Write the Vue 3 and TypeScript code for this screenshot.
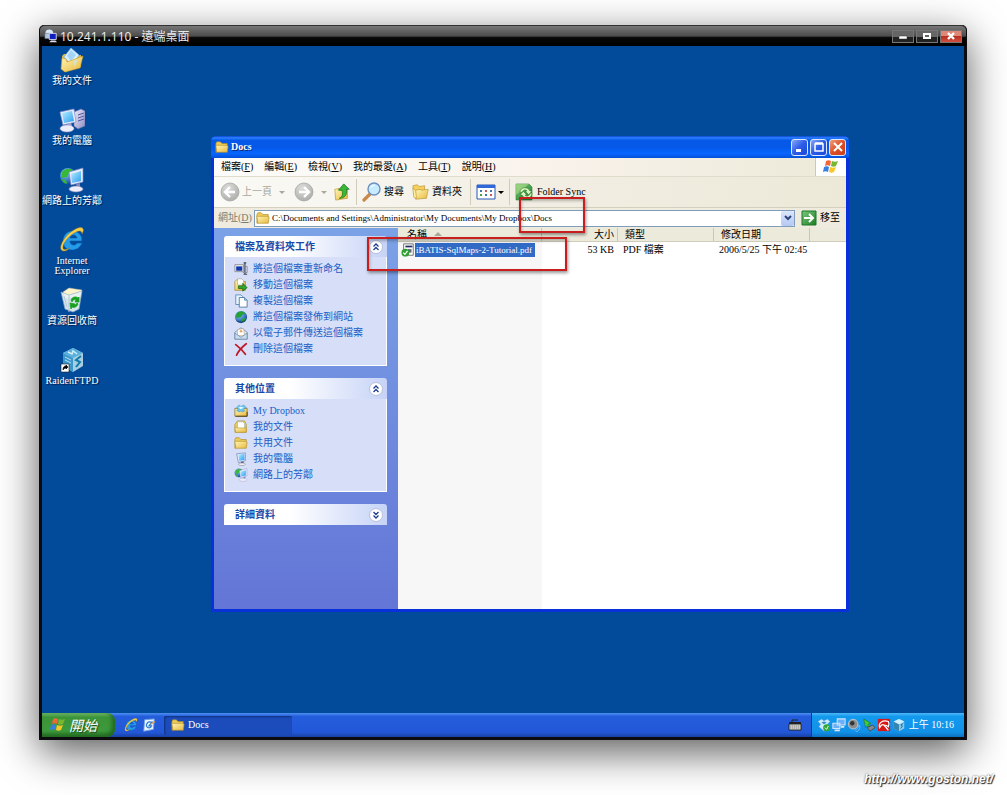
<script setup lang="ts">
interface Item {
  icon: string
  label: string
}

interface Panel {
  title: string
  open: boolean
  items: Item[]
}

const desktopIcons: Item[] = [
  { icon: 'documents', label: '我的文件' },
  { icon: 'computer', label: '我的電腦' },
  { icon: 'network', label: '網路上的芳鄰' },
  { icon: 'ie', label: 'Internet Explorer' },
  { icon: 'recycle', label: '資源回收筒' },
  { icon: 'raiden', label: 'RaidenFTPD' },
]

const menus: [string, string][] = [
  ['檔案', 'F'],
  ['編輯', 'E'],
  ['檢視', 'V'],
  ['我的最愛', 'A'],
  ['工具', 'T'],
  ['說明', 'H'],
]

const panels: Panel[] = [
  {
    title: '檔案及資料夾工作',
    open: true,
    items: [
      { icon: 'rename', label: '將這個檔案重新命名' },
      { icon: 'move', label: '移動這個檔案' },
      { icon: 'copy', label: '複製這個檔案' },
      { icon: 'globe', label: '將這個檔案發佈到網站' },
      { icon: 'mail', label: '以電子郵件傳送這個檔案' },
      { icon: 'delete', label: '刪除這個檔案' },
    ],
  },
  {
    title: '其他位置',
    open: true,
    items: [
      { icon: 'dropfolder', label: 'My Dropbox' },
      { icon: 'docfolder', label: '我的文件' },
      { icon: 'folder', label: '共用文件' },
      { icon: 'monitor', label: '我的電腦' },
      { icon: 'network', label: '網路上的芳鄰' },
    ],
  },
  { title: '詳細資料', open: false, items: [] },
]

const trayIcons: Item[] = [
  { icon: 'dropbox', label: 'Dropbox' },
  { icon: 'lan', label: 'Network' },
  { icon: 'speaker', label: 'Volume' },
  { icon: 'eject', label: 'Hardware' },
  { icon: 'umbrella', label: 'Antivirus' },
  { icon: 'cube', label: 'RaidenFTPD' },
]

const path = 'C:\\Documents and Settings\\Administrator\\My Documents\\My Dropbox\\Docs'
</script>

<template>
  <div class="page">
    <svg class="sprite" width="0" height="0" aria-hidden="true">
      <defs>
        <linearGradient id="gFolder" x1="0" y1="0" x2="1" y2="1">
          <stop offset="0" stop-color="#fff6b8" />
          <stop offset="1" stop-color="#e8b83c" />
        </linearGradient>
        <linearGradient id="gScreen" x1="0" y1="0" x2="1" y2="1">
          <stop offset="0" stop-color="#b8f0ff" />
          <stop offset="1" stop-color="#2c9cf0" />
        </linearGradient>
        <linearGradient id="gCase" x1="0" y1="0" x2="1" y2="1">
          <stop offset="0" stop-color="#eeeefc" />
          <stop offset="1" stop-color="#8c8cc4" />
        </linearGradient>
        <radialGradient id="gGlobe" cx="0.35" cy="0.3" r="0.8">
          <stop offset="0" stop-color="#8ad0ff" />
          <stop offset="1" stop-color="#0a3c9c" />
        </radialGradient>
        <radialGradient id="gGray" cx="0.4" cy="0.3" r="0.8">
          <stop offset="0" stop-color="#dededc" />
          <stop offset="1" stop-color="#a8a8a6" />
        </radialGradient>
        <linearGradient id="gGreen" x1="0" y1="0" x2="1" y2="1">
          <stop offset="0" stop-color="#7cc87c" />
          <stop offset="1" stop-color="#1c7c24" />
        </linearGradient>
      </defs>

      <symbol id="documents" viewBox="0 0 26 26">
        <path d="M3 9l2-2h5l2 2 10-1v12L6 25l-3-3z" fill="#e4b848" />
        <path d="M12 1l8 7-7 11-8-9z" fill="#d8f0ff" stroke="#78b4e8" stroke-width=".7" />
        <path d="M12 3l5 5-5 6-4-5z" fill="#a4d4f8" />
        <path d="M3 11l4 1 1 3 16-6-3 12L6 25 2 22z" fill="url(#gFolder)" stroke="#c89a28" stroke-width=".6" />
        <path d="M14 14l5-2-3 8z" fill="#cfe4d8" opacity=".8" />
      </symbol>
      <symbol id="computer" viewBox="0 0 26 26">
        <path d="M15 5l7-3 4 2v15l-7 3-4-3z" fill="url(#gCase)" stroke="#6868a8" stroke-width=".6" />
        <path d="M19 8l6-2M19 11l6-2M19 14l6-2" stroke="#5858a0" fill="none" />
        <path d="M1 5l14-3 2 13-13 3z" fill="#e8ecff" stroke="#8890c8" stroke-width=".7" />
        <path d="M3 6l10-2 2 10-10 2z" fill="url(#gScreen)" />
        <path d="M8 17l4-1 1 3h-4z" fill="#a8a8d0" />
        <ellipse cx="8" cy="21.500" rx="7" ry="3.500" fill="#eeeefa" stroke="#9898c8" stroke-width=".6" />
      </symbol>
      <symbol id="network" viewBox="0 0 26 26">
        <circle cx="9" cy="9" r="8" fill="url(#gGlobe)" />
        <path d="M3 5c3-4 8-4 11-2l-4 3-2 4-5 1zM2 12l5 1 1 4-3-1z" fill="#38b838" />
        <path d="M10 5l14-4v14l-12 3z" fill="#e8ecff" stroke="#7888c8" stroke-width=".7" />
        <path d="M12 7l10-3v10l-9 2z" fill="url(#gScreen)" />
        <path d="M17 17l4-1v4h-3z" fill="#8888b8" />
        <ellipse cx="17" cy="22" rx="7" ry="3" fill="#eeeefa" stroke="#8888b8" stroke-width=".6" />
      </symbol>
      <symbol id="ie" viewBox="0 0 26 26">
        <path
          d="M14 4a9 9 0 0 1 9 10H11c0 5 6 5 7 2h5c-2 5-6 7-10 7-6 0-9-4-9-9 0-6 4-10 10-10zm-3 7h7c-1-4-6-4-7 0z"
          fill="#249ce8" stroke="#0a58b0" stroke-width=".6"
        />
        <path d="M5 24C-2 24 3 12 12 5c5-4 11-6 12-3 1 1 0 3-1 5 0-3-2-4-6-2C10 8 3 17 4 21c0 2 3 2 6 0-1 2-3 3-5 3z" fill="#f8d048" stroke="#a87c18" stroke-width=".4" />
      </symbol>
      <symbol id="recycle" viewBox="0 0 26 26">
        <path d="M4 5l6-4 6 1 7 1-2 7-15 1z" fill="#fff4cc" stroke="#c8bc90" stroke-width=".5" />
        <path d="M2 5l8 3 13-4-3 18-6 3-8-3z" fill="#e8f2f4" stroke="#90b0c4" stroke-width=".7" opacity=".93" />
        <path d="M10 8v17M5 9l3 11" stroke="#b4c8d8" fill="none" />
        <path d="M12 13c1-3 5-4 7-2l1-1v5h-4l1-2c-2-1-3 0-4 2zM19 17c-1 3-4 4-6 3l-1 2-1-6 5 1-1 1c2 0 2-1 3-2z" fill="#18a020" stroke="#18a020" stroke-width=".8" />
      </symbol>
      <symbol id="raiden" viewBox="0 0 26 26">
        <path d="M14 1l10 5v13l-10 6-10-6V6z" fill="#a8cce0" />
        <path d="M14 1l10 5-10 5L4 6z" fill="#58b0dc" />
        <path d="M4 6l10 5v14L4 19z" fill="#3c98cc" />
        <path d="M9 5l4 2 1-3 4 3" stroke="#d0ecf8" stroke-width="1.500" fill="none" />
        <path d="M22 9l-5 4 4 2-4 5" stroke="#107cac" stroke-width="2" fill="none" />
        <path d="M6 10l6 3M6 13l6 3" stroke="#b4e0f4" fill="none" />
        <path d="M2 17h8v8H2z" fill="#fff" stroke="#222" stroke-width=".6" />
        <path d="M4 23c0-3 1-4 3-4v-1l2 2-2 2v-1c-2 0-2 1-3 2z" fill="#000" stroke="#000" stroke-width=".6" />
      </symbol>

      <symbol id="folder" viewBox="0 0 16 16">
        <path d="M1 4l1-2h4l2 2h6v3H2v7H1z" fill="#f0cc58" stroke="#a88420" stroke-width=".7" />
        <path d="M2 14L1 6h12l2 1-1 7z" fill="url(#gFolder)" stroke="#b08c20" stroke-width=".7" />
      </symbol>
      <symbol id="docfolder" viewBox="0 0 16 16">
        <path d="M1 14V5l3-4h8l2 4v9z" fill="#f0cc58" stroke="#a88420" stroke-width=".7" />
        <path d="M4 2h6l2 2v6H4z" fill="#fff" stroke="#88a8c8" stroke-width=".6" />
        <path d="M1 8l3 1h10v5H2z" fill="url(#gFolder)" stroke="#b08c20" stroke-width=".6" />
      </symbol>
      <symbol id="dropfolder" viewBox="0 0 16 16">
        <path d="M1 14V5h14v9z" fill="url(#gFolder)" stroke="#80641c" stroke-width=".8" />
        <path d="M3 4l3-3 2 2 3-2 3 3-3 2 1 2-2 1-2-1-3 1-2-2 2-1z" fill="#70c8f0" stroke="#2880b8" stroke-width=".5" />
        <path d="M5 4l3-1 3 1-3 2z" fill="#e8f8ff" />
        <path d="M2 14h13V9" stroke="#4c3c10" fill="none" />
      </symbol>
      <symbol id="openfolder" viewBox="0 0 20 20">
        <path d="M1 3l5-1 2 2 6-1v10H2z" fill="#f4d060" stroke="#b89028" stroke-width=".7" />
        <path d="M4 8l5-1 2 1 7-1-2 10-12 1z" fill="url(#gFolder)" stroke="#b89028" stroke-width=".7" />
        <path d="M2 16L1 6l3 2 1 9z" fill="#fff0a0" stroke="#b89028" stroke-width=".6" />
      </symbol>
      <symbol id="monitor" viewBox="0 0 16 16">
        <path d="M3 2l10-1v9l-8 2z" fill="#e8ecff" stroke="#6078b0" stroke-width=".7" />
        <path d="M5 3l7-1v7l-6 1z" fill="url(#gScreen)" />
        <path d="M8 11h3v2H8z" fill="#667" />
        <ellipse cx="9" cy="14" rx="4" ry="1.500" fill="#f0f0fa" stroke="#667" stroke-width=".5" />
      </symbol>
      <symbol id="rename" viewBox="0 0 16 16">
        <path d="M1 3h10v8H1z" fill="#eee" stroke="#777" stroke-width=".8" />
        <path d="M2.500 5h7v5h-7z" fill="#1038b0" />
        <path d="M11 1h3M12.500 1v13M11 14h4" stroke="#345" stroke-width="1.300" fill="none" />
        <path d="M10 5h5v7h-5" stroke="#888" fill="none" />
      </symbol>
      <symbol id="move" viewBox="0 0 16 16">
        <path d="M1 14V4l2-2h4l1 2h5v10z" fill="url(#gFolder)" stroke="#a08020" stroke-width=".8" />
        <path d="M4 1h5l2 2v5H4z" fill="#fff" stroke="#8a8a70" stroke-width=".5" />
        <path d="M5 9h5V6l5 5-5 4v-3H5z" fill="#30a830" stroke="#106010" stroke-width=".8" />
      </symbol>
      <symbol id="copy" viewBox="0 0 16 16">
        <path d="M2 1h6l2 2v9H2z" fill="#eaf4ff" stroke="#4880b0" stroke-width=".9" />
        <path d="M6 4h6l3 3v8H6z" fill="#fff" stroke="#386890" stroke-width=".9" />
        <path d="M12 4v3h3" fill="#a8d0e8" stroke="#386890" stroke-width=".7" />
      </symbol>
      <symbol id="globe" viewBox="0 0 16 16">
        <circle cx="8" cy="8" r="7" fill="url(#gGlobe)" />
        <path d="M3 4c2-3 7-4 10 0l-3 1-2 3-4 1-2-1zM9 10l5-1-2 4-4 1z" fill="#28a038" />
        <path d="M2 11c4 3 8 3 12-1-1 4-9 7-12 1z" fill="#18303c" opacity=".6" />
      </symbol>
      <symbol id="mail" viewBox="0 0 16 16">
        <path d="M1 7l7-5 7 5v8H1z" fill="#d8e8f8" stroke="#6884a8" stroke-width=".8" />
        <path d="M4 4l7-1 1 8H4z" fill="#fff" stroke="#c09060" stroke-width=".6" />
        <path d="M1 8l7 5 7-5v7H1z" fill="#c8dcf0" stroke="#587498" stroke-width=".7" />
        <circle cx="8" cy="6" r="1.500" fill="#e8a868" />
      </symbol>
      <symbol id="delete" viewBox="0 0 16 16">
        <path d="M2 3c4 3 8 7 11 11M14 2C9 6 5 10 3 15" stroke="#c01828" stroke-width="2" fill="none" stroke-linecap="round" />
      </symbol>
      <symbol id="pdf" viewBox="0 0 16 16">
        <path d="M3 1h11v13H3z" fill="#fff" stroke="#555" stroke-width=".9" />
        <path d="M5 3h8v2H5z" fill="#222c68" />
        <path d="M8 7h4v4H8z" fill="#667" />
        <circle cx="5" cy="11" r="4.500" fill="#30a030" />
        <path d="M2.500 11l2 2 3-4" stroke="#fff" stroke-width="1.400" fill="none" />
      </symbol>

      <symbol id="back" viewBox="0 0 20 20">
        <circle cx="10" cy="10" r="9" fill="url(#gGray)" stroke="#a0a09c" stroke-width=".7" />
        <path d="M10 5l-5 5 5 5M5 10h10" stroke="#fff" stroke-width="2.400" fill="none" />
      </symbol>
      <symbol id="forward" viewBox="0 0 20 20">
        <circle cx="10" cy="10" r="9" fill="url(#gGray)" stroke="#a0a09c" stroke-width=".7" />
        <path d="M10 5l5 5-5 5M15 10H5" stroke="#fff" stroke-width="2.400" fill="none" />
      </symbol>
      <symbol id="up" viewBox="0 0 20 20">
        <path d="M2 7l5-1 1 2 8-1v10L3 19z" fill="url(#gFolder)" stroke="#b89028" stroke-width=".7" />
        <path d="M7 17c4-2 4-5 3-9H6l6-7 6 6h-3c1 6-2 10-8 10z" fill="#38b838" stroke="#187018" stroke-width=".8" />
      </symbol>
      <symbol id="search" viewBox="0 0 20 20">
        <path d="M2 18l6-6" stroke="#c88848" stroke-width="3.200" stroke-linecap="round" />
        <circle cx="12" cy="7" r="6" fill="#c8ecff" stroke="#6c90c0" stroke-width="1.400" />
        <path d="M8 6c1-3 4-3 5-3-1 1-4 2-5 3z" fill="#fff" />
      </symbol>
      <symbol id="views" viewBox="0 0 20 16">
        <path d="M1 1h18v14H1z" fill="#fff" stroke="#2858b8" />
        <path d="M1 1h18v3H1z" fill="#3068d8" />
        <path d="M4 6h2v2H4zM9 10h2v2H9zM14 6h2v2h-2z" fill="#3c78a8" />
        <path d="M9 6h2v2H9zM14 10h2v2h-2z" fill="#c85858" />
        <path d="M4 10h2v2H4z" fill="#48a048" />
      </symbol>
      <symbol id="sync" viewBox="0 0 20 18">
        <path d="M1 1h13l3 3v13H1z" fill="url(#gGreen)" stroke="#388038" stroke-width=".6" />
        <path d="M1 1h13L1 12z" fill="#b0e088" opacity=".6" />
        <path d="M5 9c0-5 8-6 10-1h2l-3 4-4-4h2c-2-2-4-1-5 2zM17 10c0 6-8 7-10 2H5l3-4 4 4h-2c2 2 4 1 5-2z" fill="#dcf4c4" stroke="#287c28" stroke-width=".6" />
      </symbol>
      <symbol id="flag" viewBox="0 0 18 16">
        <path d="M4 2c2-1 3-1 5 0L8 7c-2-1-3-1-5 0z" fill="#f06838" />
        <path d="M10 2c2 1 4 1 6 0l-2 5c-2 1-3 1-5 0z" fill="#78b830" />
        <path d="M2 8c2-1 4-1 5 0l-1 5c-2-1-3-1-5 0z" fill="#3880e0" />
        <path d="M8 8c2 1 4 1 6 0l-2 5c-2 1-3 1-5 0z" fill="#f8c828" />
      </symbol>
      <symbol id="go" viewBox="0 0 16 16">
        <path d="M1 1h14v14H1z" fill="url(#gGreen)" stroke="#187828" />
        <path d="M3 8h9M8 4l4 4-4 4" stroke="#fff" stroke-width="2" fill="none" />
      </symbol>
      <symbol id="chevrons" viewBox="0 0 14 14">
        <circle cx="7" cy="7" r="6.500" fill="#fff" stroke="#b8c0dc" />
        <path d="M4.500 6.500L7 4l2.500 2.500M4.500 10L7 7.500 9.500 10" stroke="#1c3c90" stroke-width="1.300" fill="none" />
      </symbol>

      <symbol id="rdp" viewBox="0 0 16 16">
        <circle cx="6" cy="5" r="4.500" fill="#d8e8f4" />
        <path d="M1 5h7v6H1z" fill="#b0c8e0" stroke="#667" stroke-width=".6" />
        <path d="M6 5h8v7H6z" fill="#1020c0" stroke="#dde" />
        <path d="M8 13h5l2 2H6z" fill="#dde" />
      </symbol>
      <symbol id="showdesk" viewBox="0 0 16 16">
        <path d="M3 2l11-1-1 12-11 2z" fill="#e8f4ff" stroke="#70a0e0" />
        <path d="M11 5C7 3 5 6 5 9c1 3 5 3 6 0H8l4-5" stroke="#2878d0" stroke-width="1.400" fill="none" />
        <path d="M10 7l5-3" stroke="#e09848" stroke-width="1.500" />
      </symbol>
      <symbol id="keyboard" viewBox="0 0 14 12">
        <path d="M4 3V1h6" stroke="#222" fill="none" />
        <path d="M1 3h12v2H1z" fill="#222" />
        <path d="M1 5h12v6H1z" fill="#e8e8e0" stroke="#222" />
        <path d="M2 7h10M2 9h10" stroke="#777" stroke-dasharray="1.500 .5" />
      </symbol>
      <symbol id="dropbox" viewBox="0 0 16 16">
        <path d="M1 4l4-3 3 2 4-2 3 3-3 3 2 3-6 5-6-5 2-3z" fill="#c8ecfc" stroke="#4890c8" stroke-width=".6" />
        <path d="M5 5l3-1 3 1-3 2z" fill="#3c88c4" />
        <circle cx="11" cy="11" r="4" fill="#30a838" />
        <path d="M9 11l2 2 2-4" stroke="#fff" fill="none" />
      </symbol>
      <symbol id="lan" viewBox="0 0 16 16">
        <path d="M6 1h9v7H6zM1 6h8v6H1z" fill="#68b0f8" stroke="#d4e4fc" stroke-width="1.200" />
        <path d="M3 14h6M10 10h4" stroke="#dce8fc" stroke-width="2" />
      </symbol>
      <symbol id="speaker" viewBox="0 0 16 16">
        <circle cx="7" cy="7" r="5.500" fill="#8c8c8c" stroke="#ccc" />
        <circle cx="6" cy="6" r="2.500" fill="#333" />
        <path d="M12 7c2 3 0 6-3 7M14 8c2 4-1 7-4 8" stroke="#8cbcff" fill="none" />
      </symbol>
      <symbol id="eject" viewBox="0 0 16 16">
        <path d="M2 1l8 5-3 1 2 3-4-1-1 2z" fill="#48c838" stroke="#187018" stroke-width=".6" />
        <path d="M6 11l6-3 3 3-6 4z" fill="#888" stroke="#333" stroke-width=".7" />
      </symbol>
      <symbol id="umbrella" viewBox="0 0 16 16">
        <path d="M1 1h14v14H1z" fill="#d81818" />
        <path d="M3 11C1 5 7 2 13 4c1 2 1 4 0 6-2-2-4-2-5-2-2-1-4 1-5 3z" fill="#d81818" stroke="#fff" stroke-width="1.400" />
        <path d="M8 8l5 6" stroke="#fff" stroke-width="1.400" />
      </symbol>
      <symbol id="cube" viewBox="0 0 16 16">
        <path d="M8 1l6 3v8l-6 3-6-3V4z" fill="#88ccec" />
        <path d="M2 4l6 3v8l-6-3z" fill="#3884b0" />
        <path d="M8 1l6 3-6 3-6-3z" fill="#d0f0fc" />
        <path d="M13 6l-3 2 2 1-2 3" stroke="#1c6490" fill="none" />
      </symbol>
    </svg>

    <main class="remote">
      <header class="remote-bar">
        <svg class="i14"><use href="#rdp" /></svg>
        <h1>10.241.1.110 - 遠端桌面</h1>
        <div class="remote-btns">
          <button type="button" aria-label="Minimize">
            <svg viewBox="0 0 10 10"><path d="M1 5h8v3H1z" fill="#fff" stroke="#333" stroke-width=".5" /></svg>
          </button>
          <button type="button" aria-label="Maximize">
            <svg viewBox="0 0 10 10"><path d="M2 3h6v4H2z" fill="none" stroke="#fff" stroke-width="2" /></svg>
          </button>
          <button type="button" class="red" aria-label="Close">
            <svg viewBox="0 0 10 10"><path d="M2 2l6 6M8 2L2 8" stroke="#fff" stroke-width="2.400" /></svg>
          </button>
        </div>
      </header>

      <section class="desktop">
        <nav class="shortcuts">
          <a v-for="s in desktopIcons" :key="s.label" href="#">
            <svg class="i26"><use :href="'#' + s.icon" /></svg>
            <span>{{ s.label }}</span>
          </a>
        </nav>

        <section class="window">
          <header class="win-bar">
            <svg class="i14"><use href="#folder" /></svg>
            <h2>Docs</h2>
            <button type="button" aria-label="Minimize window">
              <svg viewBox="0 0 14 14"><path d="M3 9h5v3H3z" fill="#fff" /></svg>
            </button>
            <button type="button" aria-label="Maximize window">
              <svg viewBox="0 0 14 14"><path d="M3 4h8v7H3zM3 3h8" fill="none" stroke="#fff" stroke-width="1.500" /></svg>
            </button>
            <button type="button" class="close" aria-label="Close window">
              <svg viewBox="0 0 14 14"><path d="M3 3l8 8M11 3l-8 8" stroke="#fff" stroke-width="2" /></svg>
            </button>
          </header>

          <div class="menu-row">
            <nav class="menus">
              <button v-for="[name, key] in menus" :key="key" type="button">{{ name }}(<u>{{ key }}</u>)</button>
            </nav>
            <div class="flag"><svg><use href="#flag" /></svg></div>
          </div>

          <div class="toolbar">
            <button type="button" class="off nav-back"><svg class="i20"><use href="#back" /></svg>上一頁<i class="caret" /></button>
            <button type="button" class="off nav-fwd" aria-label="Forward"><svg class="i20"><use href="#forward" /></svg><i class="caret" /></button>
            <button type="button" aria-label="Up"><svg class="i18"><use href="#up" /></svg></button>
            <span class="sep" />
            <button type="button"><svg class="i20"><use href="#search" /></svg>搜尋</button>
            <button type="button" class="folders"><svg class="i18"><use href="#openfolder" /></svg>資料夾</button>
            <span class="sep" />
            <button type="button" aria-label="Views"><svg class="i20"><use href="#views" /></svg><i class="caret" /></button>
            <span class="sep" />
            <button type="button"><svg class="i20"><use href="#sync" /></svg>Folder Sync</button>
          </div>

          <div class="address">
            <label for="addr">網址(<u>D</u>)</label>
            <div class="addr-box">
              <svg class="i14"><use href="#folder" /></svg>
              <input id="addr" type="text" :value="path" />
              <button type="button" aria-label="Address list">
                <svg viewBox="0 0 10 10"><path d="M2 3l3 3 3-3" fill="none" stroke="#2c4478" stroke-width="2" /></svg>
              </button>
            </div>
            <button type="button" class="go"><svg class="i16"><use href="#go" /></svg>移至</button>
          </div>

          <div class="content">
            <aside>
              <section v-for="p in panels" :key="p.title" class="panel">
                <header>
                  <h3>{{ p.title }}</h3>
                  <button type="button" :aria-label="p.title" :aria-expanded="p.open">
                    <svg class="i14" :class="{ flip: !p.open }"><use href="#chevrons" /></svg>
                  </button>
                </header>
                <ul v-if="p.open">
                  <li v-for="t in p.items" :key="t.label">
                    <a href="#"><svg class="i14"><use :href="'#' + t.icon" /></svg>{{ t.label }}</a>
                  </li>
                </ul>
              </section>
            </aside>

            <div class="files">
              <table>
                <colgroup>
                  <col class="c-name" /><col class="c-size" /><col class="c-type" /><col class="c-date" /><col />
                </colgroup>
                <thead>
                  <tr>
                    <th>名稱<i class="sort" /></th>
                    <th class="num">大小</th>
                    <th>類型</th>
                    <th>修改日期</th>
                    <th />
                  </tr>
                </thead>
                <tbody>
                  <tr>
                    <td><div class="file"><svg class="i14"><use href="#pdf" /></svg><span>iBATIS-SqlMaps-2-Tutorial.pdf</span></div></td>
                    <td class="num">53 KB</td>
                    <td>PDF 檔案</td>
                    <td>2006/5/25 下午 02:45</td>
                    <td />
                  </tr>
                </tbody>
              </table>
            </div>
          </div>

          <div class="mark mark-path" />
          <div class="mark mark-file" />
        </section>
      </section>

      <footer class="taskbar">
        <button type="button" class="start"><svg><use href="#flag" /></svg>開始</button>
        <div class="quick">
          <button type="button" aria-label="Internet Explorer"><svg class="i14"><use href="#ie" /></svg></button>
          <button type="button" aria-label="Show desktop"><svg class="i14"><use href="#showdesk" /></svg></button>
        </div>
        <button type="button" class="task"><svg class="i14"><use href="#folder" /></svg>Docs</button>
        <button type="button" class="lang" aria-label="Keyboard"><svg class="i14"><use href="#keyboard" /></svg></button>
        <div class="tray">
          <svg v-for="t in trayIcons" :key="t.icon" class="i14" role="img" :aria-label="t.label"><use :href="'#' + t.icon" /></svg>
          <time>上午 10:16</time>
        </div>
      </footer>
    </main>

    <p class="credit"><a href="#">http://www.goston.net/</a></p>
  </div>
</template>

<style>
body {
  margin: 0;
  background: #fff;
}
</style>

<style scoped>
.page {
  box-sizing: border-box;
  min-height: 100vh;
  padding: 25px 40px 0 39px;
  display: flex;
  flex-direction: column;
  overflow: hidden;
  font: 10px/12px 'Liberation Serif', 'Noto Sans CJK TC', serif;
  color: #000;
}
.sprite {
  position: absolute;
}
h1, h2, h3, p, ul {
  margin: 0;
  padding: 0;
  list-style: none;
}
button {
  margin: 0;
  padding: 0;
  border: 0;
  background: none;
  font: inherit;
  color: inherit;
  display: flex;
  align-items: center;
  white-space: nowrap;
}
a {
  color: inherit;
  text-decoration: none;
}
svg {
  display: block;
  flex: none;
}
.i14 { width: 14px; height: 14px; }
.i16 { width: 16px; height: 16px; }
.i18 { width: 18px; height: 18px; }
.i20 { width: 20px; height: 20px; }
.i26 { width: 26px; height: 26px; }

.remote {
  flex: 1;
  display: flex;
  flex-direction: column;
  box-sizing: border-box;
  border: 3px solid #0c0c10;
  border-top: 0;
  border-radius: 5px 5px 1px 1px;
  background: #0c0c10;
  box-shadow: 0 12px 40px rgba(0, 0, 0, 0.65);
}
.remote-bar {
  height: 21px;
  margin: 0 -2px;
  padding: 0 4px;
  box-sizing: border-box;
  display: flex;
  align-items: center;
  gap: 2px;
  border-radius: 5px 5px 0 0;
  border-top: 1px solid #333;
  background: linear-gradient(#777, #4c4c4c 50%, #080808 58%, #000);
  color: #e8e8e8;
}
.remote-bar h1 {
  flex: 1;
  padding-top: 2px;
  font: 12px/18px 'Noto Sans', 'Noto Sans CJK TC', sans-serif;
}
.remote-btns {
  display: flex;
  gap: 2px;
}
.remote-btns button {
  width: 22px;
  height: 13px;
  box-sizing: border-box;
  justify-content: center;
  border: 1px solid #777;
  background: linear-gradient(#666 50%, #222 50%);
}
.remote-btns .red {
  background: linear-gradient(#e08878 45%, #b83020 50%, #d05040);
}
.remote-btns svg {
  width: 10px;
  height: 10px;
}

.desktop {
  flex: 1;
  position: relative;
  background: #024b9b;
}
.shortcuts {
  width: 60px;
  display: flex;
  flex-direction: column;
}
.shortcuts a {
  height: 59px;
  padding-top: 1px;
  display: flex;
  flex-direction: column;
  align-items: center;
  gap: 3px;
  color: #fff;
  line-height: 10px;
  text-align: center;
  text-shadow: 1px 1px 1px #001c48;
}

.window {
  position: absolute;
  inset: 90px 115px 101px 169px;
  box-sizing: border-box;
  padding: 0 3px 3px;
  display: flex;
  flex-direction: column;
  border-radius: 5px 5px 0 0;
  background: #0831d9;
}
.win-bar {
  height: 22px;
  margin: 0 -3px;
  padding: 0 3px 0 4px;
  display: flex;
  align-items: center;
  gap: 2px;
  border-radius: 5px 5px 0 0;
  background: linear-gradient(#0a44d0, #2a80ff 8%, #0558e8 20%, #0558e8 50%, #0866ff 80%, #0450d8);
  color: #fff;
}
.win-bar h2 {
  flex: 1;
  font: bold 10px/12px 'Liberation Serif', serif;
  text-shadow: 1px 1px #0a2878;
}
.win-bar button {
  width: 17px;
  height: 17px;
  box-sizing: border-box;
  justify-content: center;
  border: 1px solid #dce8ff;
  border-radius: 3px;
  background: linear-gradient(135deg, #88a8f8, #2c5ce8 50%, #1c48d8);
}
.win-bar .close {
  background: linear-gradient(135deg, #f0a080, #dc5028 50%, #c83c18);
}
.win-bar button svg {
  width: 14px;
  height: 14px;
}

.menu-row {
  display: flex;
  height: 18px;
  background: linear-gradient(90deg, #fcfcfa, #f8f2ea 55%, #ece9d8);
  border-bottom: 1px solid #e0dccc;
}
.menus {
  flex: 1;
  display: flex;
  gap: 11px;
  padding-left: 7px;
}
.flag {
  width: 30px;
  display: flex;
  align-items: center;
  justify-content: center;
  border-left: 1px solid #ccc8b8;
  background: #fff;
}
.flag svg, .start svg {
  width: 18px;
  height: 16px;
}

.toolbar {
  height: 30px;
  padding-left: 6px;
  display: flex;
  align-items: center;
  gap: 5px;
  border-bottom: 1px solid #d4d0c0;
  background: linear-gradient(90deg, #fafaf6, #f2eee4 50%, #ece9d8);
}
.toolbar button {
  gap: 2px;
}
.off {
  color: #a8a89c;
}
.nav-back .caret {
  margin: 0 4px 0 5px;
}
.nav-fwd .caret {
  margin: 0 1px 0 5px;
}
.folders {
  margin: 0 3px;
}
.caret {
  border: 3px solid transparent;
  border-top-color: currentColor;
  border-bottom: 0;
}
.sep {
  width: 1px;
  height: 26px;
  background: #d0ccbc;
}

.address {
  height: 20px;
  padding: 0 6px 0 4px;
  display: flex;
  align-items: center;
  gap: 2px;
  background: #efecdf;
}
.address label {
  color: #7c7c70;
}
.addr-box {
  flex: 1;
  height: 17px;
  box-sizing: border-box;
  display: flex;
  align-items: center;
  border: 1px solid #7f9db9;
  background: #fff;
}
.addr-box .i14 {
  margin-left: 1px;
}
.addr-box input {
  flex: 1;
  min-width: 0;
  height: 15px;
  box-sizing: border-box;
  border: 0;
  padding: 0 2px;
  outline: 0;
  background: none;
  font: inherit;
  font-size: 9px;
}
.addr-box button {
  width: 13px;
  height: 15px;
  justify-content: center;
  border-radius: 2px;
  background: linear-gradient(#dce6fc, #b4c8f4);
}
.addr-box button svg {
  width: 10px;
  height: 10px;
}
.go {
  gap: 3px;
  margin-left: 4px;
}

.content {
  flex: 1;
  min-height: 0;
  display: flex;
  background: #fff;
}
aside {
  width: 184px;
  box-sizing: border-box;
  padding: 8px 11px 8px 10px;
  display: flex;
  flex-direction: column;
  gap: 12px;
  background: linear-gradient(#7ba2e7, #6375d6);
}
.panel header {
  height: 21px;
  padding: 0 4px 0 11px;
  display: flex;
  align-items: center;
  justify-content: space-between;
  border-radius: 3px 3px 0 0;
  background: linear-gradient(90deg, #fff 40%, #c6d3f7);
}
.panel h3 {
  font-size: 10px;
  font-weight: bold;
  color: #1848a8;
}
.flip {
  transform: rotate(180deg);
}
.panel ul {
  padding: 4px 9px 8px;
  border: 1px solid #fff;
  border-top: 0;
  background: #d6dff7;
}
.panel li a {
  height: 16px;
  display: flex;
  align-items: center;
  gap: 5px;
  color: #215dc6;
  white-space: nowrap;
}

.files {
  flex: 1;
  min-width: 0;
  background: linear-gradient(90deg, #f7f7f7 144px, #fff 144px);
}
table {
  width: 100%;
  table-layout: fixed;
  border-collapse: separate;
  border-spacing: 0;
}
.c-name { width: 144px; }
.c-size { width: 76px; }
.c-type { width: 96px; }
.c-date { width: 96px; }
th, td {
  padding: 0 5px;
  text-align: left;
  font-weight: normal;
  white-space: nowrap;
}
th {
  height: 14px;
  line-height: 12px;
  box-sizing: border-box;
  padding: 0 7px;
  background: linear-gradient(90deg, #ebeadb calc(100% - 1px), #cbc7b8 0);
  border-bottom: 1px solid #d0ccbc;
}
th:first-child {
  padding-left: 9px;
}
th:last-child {
  background: #ebeadb;
}
.num {
  text-align: right;
  padding-right: 4px;
}
td {
  height: 15px;
}
td:first-child {
  padding: 0 3px;
}
.sort {
  display: inline-block;
  margin: 0 0 2px 7px;
  border: 4px solid transparent;
  border-top: 0;
  border-bottom-color: #aca899;
}
.file {
  display: flex;
  align-items: center;
}
.file span {
  padding: 1px 3px 1px 1px;
  background: #316ac5;
  color: #fff;
  font-size: 9px;
}

.mark {
  position: absolute;
  box-sizing: border-box;
  border: 2px solid #c81e1e;
  box-shadow: 1px 2px 3px rgba(0, 0, 0, 0.4), inset 1px 2px 3px rgba(0, 0, 0, 0.25);
}
.mark-path {
  left: 308px;
  top: 61px;
  width: 66px;
  height: 36px;
}
.mark-file {
  left: 156px;
  top: 101px;
  width: 200px;
  height: 34px;
}

.taskbar {
  height: 24px;
  display: flex;
  align-items: center;
  background: linear-gradient(#4c90f0, #245ddc 14%, #2258d8 80%, #1941a5);
  color: #fff;
}
.start {
  width: 73px;
  height: 24px;
  padding-left: 7px;
  box-sizing: border-box;
  gap: 2px;
  border-radius: 0 8px 8px 0;
  background: linear-gradient(#70b868, #3c9438 18%, #3c9a3c 75%, #2c7428);
  box-shadow: inset -3px -2px 4px #206820;
  font: italic 14px/20px 'Noto Sans CJK TC', sans-serif;
  text-shadow: 1px 1px 1px #184c18;
}
.quick {
  display: flex;
  gap: 4px;
  margin: 0 8px 0 9px;
}
.task {
  width: 128px;
  height: 19px;
  padding-left: 7px;
  box-sizing: border-box;
  gap: 3px;
  border-radius: 2px;
  background: #1c4cbc;
  box-shadow: inset 1px 1px 2px #10307c;
}
.lang {
  margin: 0 9px 0 auto;
}
.tray {
  height: 24px;
  padding: 0 10px 0 5px;
  box-sizing: border-box;
  display: flex;
  align-items: center;
  gap: 1px;
  border-left: 1px solid #0c3c94;
  background: linear-gradient(#50b8f8, #129aee 14%, #1290e8 80%, #0c70c0);
}
.tray time {
  margin-left: 2px;
}

.credit {
  height: 55px;
  display: flex;
  align-items: flex-end;
  justify-content: flex-end;
  margin-right: -26px;
  padding-bottom: 8px;
  box-sizing: border-box;
  position: relative;
  font: italic bold 12px/16px 'Liberation Sans', sans-serif;
  color: #fff;
  text-shadow: 1px 1px 1px #222, 0 0 2px #555;
}
</style>
